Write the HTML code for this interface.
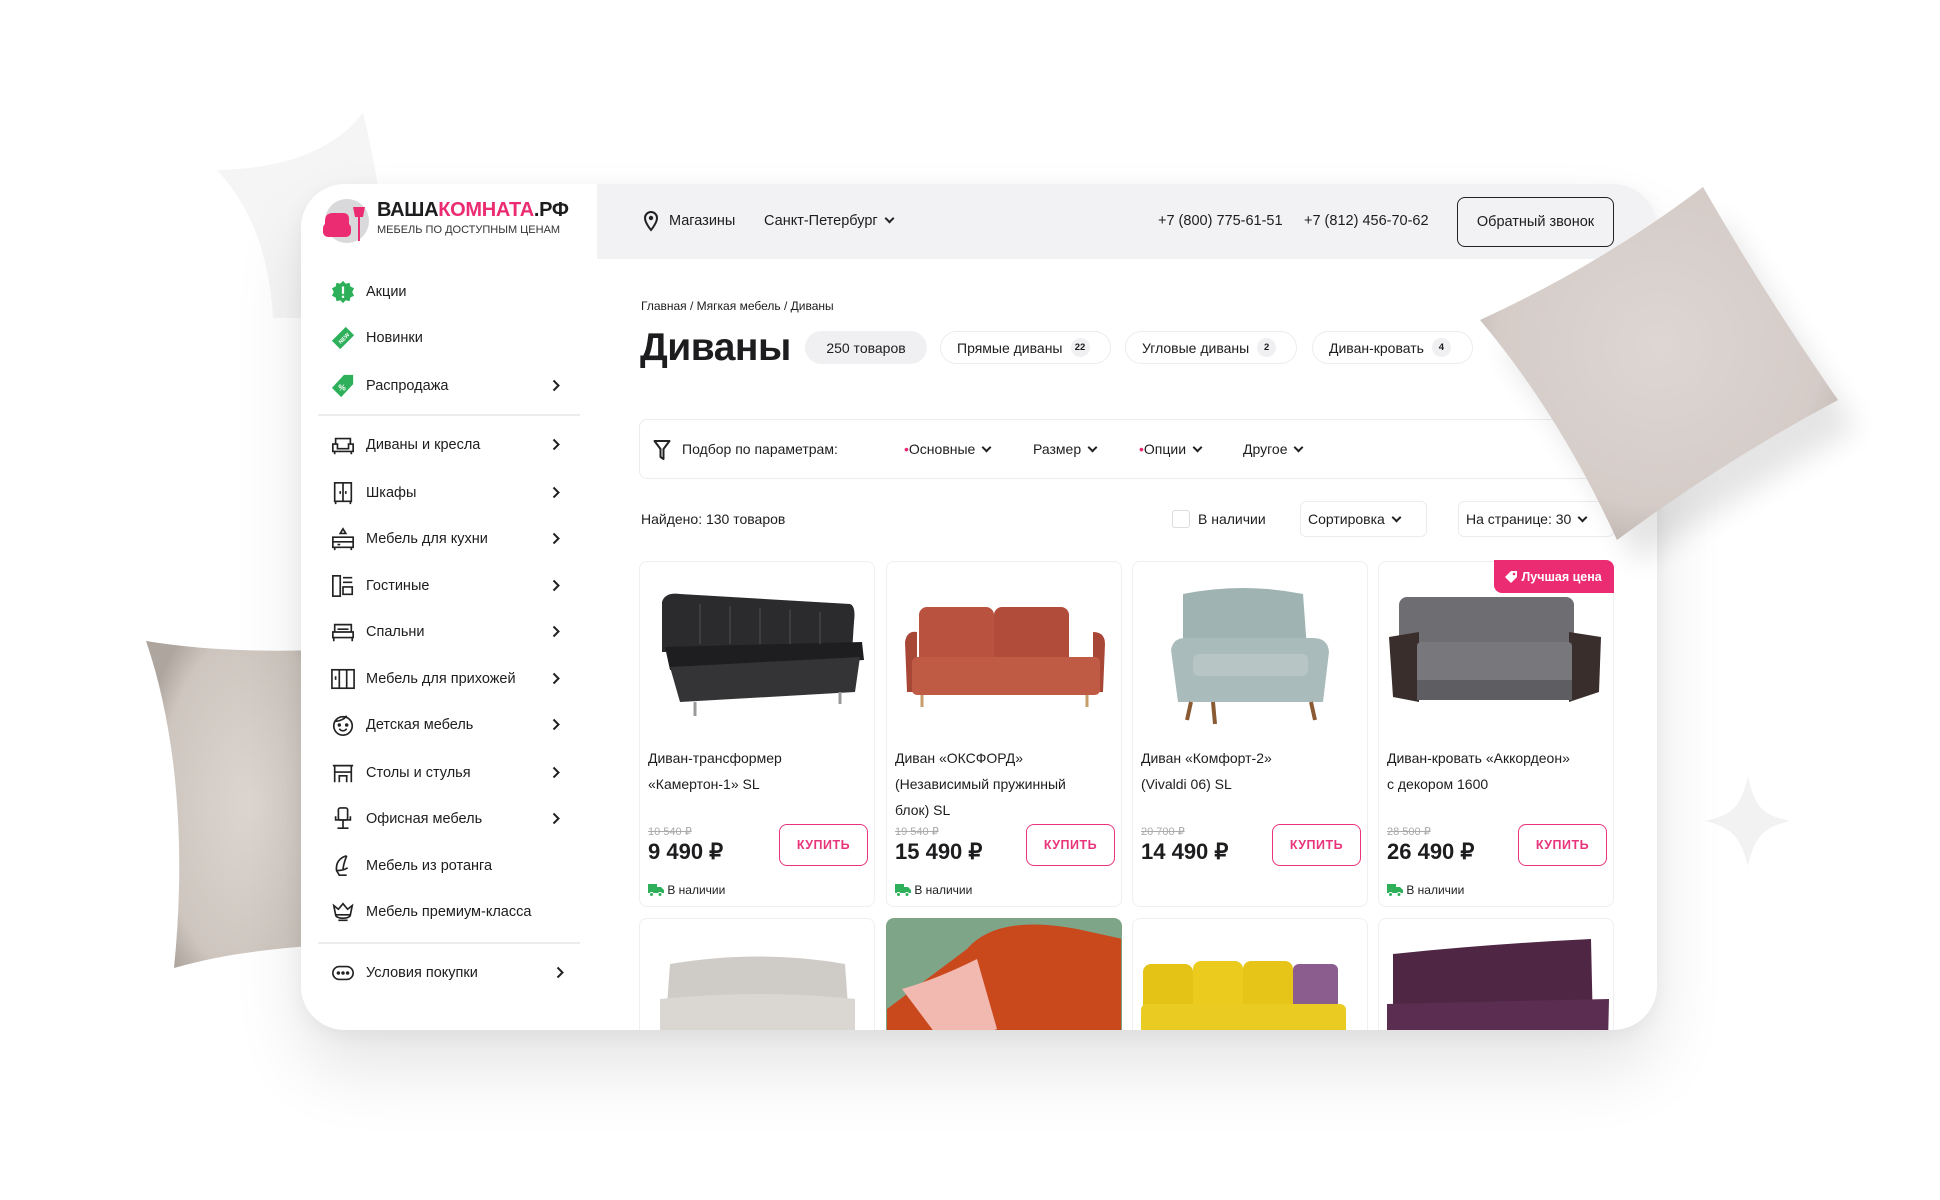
<!DOCTYPE html>
<html><head><meta charset="utf-8">
<style>
*{box-sizing:border-box;margin:0;padding:0}
html,body{width:1940px;height:1200px;overflow:hidden}
body{background:#fff;position:relative;font-family:"Liberation Sans","Noto Sans CJK SC",sans-serif;color:#1d1d1f}
.abs{position:absolute}
#win{position:absolute;left:301px;top:184px;width:1356px;height:846px;background:#fff;border-radius:44px;overflow:hidden;box-shadow:0 40px 70px rgba(0,0,0,.10),0 5px 20px rgba(0,0,0,.05)}
.side{position:absolute;left:0;top:0;width:296px;height:846px;background:#fff}
.hdr{position:absolute;left:296px;top:0;width:1060px;height:75px;background:#f2f2f4}
.mi{position:absolute;left:30px;height:30px;width:240px;font-size:14.5px;display:flex;align-items:center;white-space:nowrap}
.mi svg{width:24px;height:24px;margin-right:11px;flex:none}
.mi .ch{position:absolute;right:0;top:8px;width:8px;height:13px}
.sep{position:absolute;left:17px;width:262px;height:2px;background:#ececee}
.t{position:absolute;white-space:nowrap}
.chip{position:absolute;top:147px;height:33px;border:1.5px solid #ececee;border-radius:17px;font-size:14px;display:flex;align-items:center;padding:0 8px 0 16px;white-space:nowrap}
.chip b{font-size:9.5px;background:#f0f0f2;border-radius:50%;width:19px;height:19px;display:inline-flex;align-items:center;justify-content:center;margin-left:8px;font-weight:bold}
.dd{display:inline-block;width:7px;height:7px;border-right:2px solid #222;border-bottom:2px solid #222;transform:rotate(45deg);margin-left:8px;position:relative;top:-3px}
.card{position:absolute;width:236px;height:346px;border:1.5px solid #efeff1;border-radius:8px;background:#fff;overflow:hidden}
.card .ti{position:absolute;left:8px;top:183px;font-size:14px;line-height:26px;width:225px}
.card .op{position:absolute;left:8px;top:263px;font-size:11px;color:#aaa;text-decoration:line-through}
.card .pr{position:absolute;left:8px;top:277px;font-size:22px;font-weight:bold}
.card .bt{position:absolute;left:139px;top:262px;width:89px;height:42px;border:1.5px solid #e8347a;border-radius:8px;color:#e8347a;font-size:12.5px;font-weight:bold;display:flex;align-items:center;justify-content:center;letter-spacing:.5px}
.card .av{position:absolute;left:8px;top:321px;font-size:12px;display:flex;align-items:center}
.card .img{position:absolute;left:0;top:0;width:236px;height:170px}
</style></head><body>

<svg class="abs" style="left:0;top:0" width="1940" height="1200">
<defs>
<radialGradient id="pg" cx="50%" cy="45%" r="60%"><stop offset="0" stop-color="#ddd6d2"/><stop offset=".75" stop-color="#d5ccc8"/><stop offset="1" stop-color="#bdb3ae"/></radialGradient>
<radialGradient id="pg2" cx="60%" cy="50%" r="65%"><stop offset="0" stop-color="#ddd6d0"/><stop offset=".8" stop-color="#cdc5be"/><stop offset="1" stop-color="#aea59e"/></radialGradient>
</defs>
<path d="M363 113 Q320 168 217 170 Q268 225 273 318 L390 318 L378 186 Q370 140 363 113 Z" fill="#f5f5f6"/>
<path d="M1748 776 C1755 810 1765 815 1790 821 C1765 827 1755 835 1748 866 C1740 835 1730 827 1705 821 C1730 815 1740 810 1748 776Z" fill="#f2f2f3"/>
<path d="M146 641 C200 650 260 652 320 650 L320 945 C260 950 220 955 174 968 C185 860 180 740 146 641Z" fill="url(#pg2)"/>
</svg>

<div id="win">
 <div class="side">
  <svg class="abs" style="left:20px;top:15px" width="52" height="46" viewBox="0 0 52 46">
   <circle cx="26" cy="22" r="22" fill="#d9d9dc"/>
   <path d="M4 22 q0-8 8-8 h10 q6 0 6 6 v12 h-24z" fill="#ec2c72"/>
   <rect x="2" y="24" width="28" height="14" rx="5" fill="#ec2c72"/>
   <path d="M32 8 h12 l-2 10 h-8z" fill="#ec2c72"/><rect x="37" y="18" width="2" height="24" fill="#ec2c72"/>
  </svg>
  <div class="t" style="left:76px;top:15px;font-size:20px;font-weight:bold;letter-spacing:-.3px">ВАША<span style="color:#ec2c72">КОМНАТА</span>.РФ</div>
  <div class="t" style="left:76px;top:40px;font-size:11px;color:#333">МЕБЕЛЬ ПО ДОСТУПНЫМ ЦЕНАМ</div>

  <div class="mi" style="top:93px"><svg viewBox="0 0 26 26"><path d="M13 1l3 3 4-1 1 4 4 2-2 4 2 4-4 2-1 4-4-1-3 3-3-3-4 1-1-4-4-2 2-4-2-4 4-2 1-4 4 1z" fill="#2eb05a"/><rect x="11.8" y="7" width="2.4" height="8" fill="#fff"/><rect x="11.8" y="17" width="2.4" height="2.4" fill="#fff"/></svg>Акции</div>
  <div class="mi" style="top:139px"><svg viewBox="0 0 26 26"><path d="M16 1 L25 10 L10 25 L1 16Z" fill="#2eb05a"/><text x="7" y="17" font-size="6" fill="#fff" font-weight="bold" transform="rotate(-45 12 14)" font-family="Liberation Sans">NEW</text></svg>Новинки</div>
  <div class="mi" style="top:187px"><svg viewBox="0 0 26 26"><path d="M14 1 h10 v10 L11 25 L1 15Z" fill="#2eb05a"/><text x="8" y="18" font-size="9" fill="#fff" font-weight="bold" font-family="Liberation Sans">%</text></svg>Распродажа<svg class="ch" viewBox="0 0 8 13"><path d="M1.5 1.5l5 5-5 5" stroke="#222" stroke-width="2" fill="none"/></svg></div>
  <div class="sep" style="top:230px"></div>
  <div class="mi" style="top:246px"><svg viewBox="0 0 26 26" fill="none" stroke="#222" stroke-width="1.8"><path d="M5 12V6h16v6M2 12h5v5h12v-5h5v8H2zM4 20v3M22 20v3"/></svg>Диваны и кресла<svg class="ch" viewBox="0 0 8 13"><path d="M1.5 1.5l5 5-5 5" stroke="#222" stroke-width="2" fill="none"/></svg></div>
  <div class="mi" style="top:294px"><svg viewBox="0 0 26 26" fill="none" stroke="#222" stroke-width="1.8"><rect x="4" y="2" width="18" height="20"/><path d="M13 2v20M10 11v3M16 11v3M5 22v3M21 22v3"/></svg>Шкафы<svg class="ch" viewBox="0 0 8 13"><path d="M1.5 1.5l5 5-5 5" stroke="#222" stroke-width="2" fill="none"/></svg></div>
  <div class="mi" style="top:340px"><svg viewBox="0 0 26 26" fill="none" stroke="#222" stroke-width="1.8"><path d="M2 11h22v11H2zM2 16h22M13 2l-3 5h6zM4 22v3M22 22v3M7 19h3"/></svg>Мебель для кухни<svg class="ch" viewBox="0 0 8 13"><path d="M1.5 1.5l5 5-5 5" stroke="#222" stroke-width="2" fill="none"/></svg></div>
  <div class="mi" style="top:387px"><svg viewBox="0 0 26 26" fill="none" stroke="#222" stroke-width="1.8"><rect x="2" y="2" width="8" height="22"/><path d="M13 4h10M13 9h10M13 14h10v8H13z"/></svg>Гостиные<svg class="ch" viewBox="0 0 8 13"><path d="M1.5 1.5l5 5-5 5" stroke="#222" stroke-width="2" fill="none"/></svg></div>
  <div class="mi" style="top:433px"><svg viewBox="0 0 26 26" fill="none" stroke="#222" stroke-width="1.8"><path d="M4 13V5h18v8M2 13h22v6H2zM3 19v4M23 19v4M7 10h12"/></svg>Спальни<svg class="ch" viewBox="0 0 8 13"><path d="M1.5 1.5l5 5-5 5" stroke="#222" stroke-width="2" fill="none"/></svg></div>
  <div class="mi" style="top:480px"><svg viewBox="0 0 26 26" fill="none" stroke="#222" stroke-width="1.8"><rect x="1" y="3" width="24" height="20"/><path d="M9 3v20M17 3v20M5 10v4"/></svg>Мебель для прихожей<svg class="ch" viewBox="0 0 8 13"><path d="M1.5 1.5l5 5-5 5" stroke="#222" stroke-width="2" fill="none"/></svg></div>
  <div class="mi" style="top:526px"><svg viewBox="0 0 26 26" fill="none" stroke="#222" stroke-width="1.8"><circle cx="13" cy="14" r="10"/><path d="M5 9c5 0 10-3 12-6M9 17c2 3 6 3 8 0"/><circle cx="9" cy="13" r="1"/><circle cx="17" cy="13" r="1"/></svg>Детская мебель<svg class="ch" viewBox="0 0 8 13"><path d="M1.5 1.5l5 5-5 5" stroke="#222" stroke-width="2" fill="none"/></svg></div>
  <div class="mi" style="top:574px"><svg viewBox="0 0 26 26" fill="none" stroke="#222" stroke-width="1.8"><path d="M2 5h22M4 5v18M22 5v18M4 12h18M8 16h10M9 16v7M17 16v7"/></svg>Столы и стулья<svg class="ch" viewBox="0 0 8 13"><path d="M1.5 1.5l5 5-5 5" stroke="#222" stroke-width="2" fill="none"/></svg></div>
  <div class="mi" style="top:620px"><svg viewBox="0 0 26 26" fill="none" stroke="#222" stroke-width="1.8"><rect x="8" y="1" width="10" height="13" rx="2"/><path d="M5 10v4h16v-4M13 14v6M7 23h12M13 20v3"/></svg>Офисная мебель<svg class="ch" viewBox="0 0 8 13"><path d="M1.5 1.5l5 5-5 5" stroke="#222" stroke-width="2" fill="none"/></svg></div>
  <div class="mi" style="top:667px"><svg viewBox="0 0 26 26" fill="none" stroke="#222" stroke-width="1.8"><path d="M17 2c-8 2-12 8-11 16l3 5h8M17 2c-2 5-4 10-4 16M6 18c4 0 9-1 12-3"/></svg>Мебель из ротанга</div>
  <div class="mi" style="top:713px"><svg viewBox="0 0 26 26" fill="none" stroke="#222" stroke-width="1.8"><path d="M3 6l5 4 5-6 5 6 5-4-2 10H5zM5 16c0 5 16 5 16 0M8 22h10"/></svg>Мебель премиум-класса</div>
  <div class="sep" style="top:758px"></div>
  <div class="mi" style="top:774px"><svg viewBox="0 0 26 26" fill="none" stroke="#222" stroke-width="1.8"><rect x="2" y="6" width="22" height="14" rx="7"/><circle cx="8" cy="13" r="1" fill="#222"/><circle cx="13" cy="13" r="1" fill="#222"/><circle cx="18" cy="13" r="1" fill="#222"/></svg>Условия покупки<svg class="ch" style="right:-4px" viewBox="0 0 8 13"><path d="M1.5 1.5l5 5-5 5" stroke="#222" stroke-width="2" fill="none"/></svg></div>
 </div>

 <div class="hdr"></div>
 <svg class="abs" style="left:342px;top:26px" width="16" height="22" viewBox="0 0 16 22"><path d="M8 20s-6-7-6-12a6 6 0 0112 0c0 5-6 12-6 12z" fill="none" stroke="#222" stroke-width="2"/><circle cx="8" cy="8" r="2.2" fill="#222"/></svg>
 <div class="t" style="left:368px;top:29px;font-size:14.5px">Магазины</div>
 <div class="t" style="left:463px;top:29px;font-size:14.5px">Санкт-Петербург<span class="dd"></span></div>
 <div class="t" style="left:857px;top:29px;font-size:14.5px">+7 (800) 775-61-51</div>
 <div class="t" style="left:1003px;top:29px;font-size:14.5px">+7 (812) 456-70-62</div>
 <div class="abs" style="left:1156px;top:13px;width:157px;height:50px;border:1.5px solid #222;border-radius:8px;font-size:14.5px;display:flex;align-items:center;justify-content:center">Обратный звонок</div>

 <div class="t" style="left:340px;top:115px;font-size:12px">Главная / Мягкая мебель / Диваны</div>
 <div class="t" style="left:339px;top:142px;font-size:39px;font-weight:bold;letter-spacing:-.5px">Диваны</div>
 <div class="chip" style="left:504px;width:122px;background:#f0f0f2;border-color:#f0f0f2;padding:0;justify-content:center">250 товаров</div>
 <div class="chip" style="left:639px;width:171px">Прямые диваны<b>22</b></div>
 <div class="chip" style="left:824px;width:172px">Угловые диваны<b>2</b></div>
 <div class="chip" style="left:1011px;width:161px">Диван-кровать<b>4</b></div>

 <div class="abs" style="left:338px;top:235px;width:1000px;height:60px;border:1.5px solid #ececee;border-radius:8px"></div>
 <svg class="abs" style="left:352px;top:255px" width="18" height="22" viewBox="0 0 18 22"><path d="M1.5 2h15l-6 8v10l-3-2v-8z" fill="none" stroke="#222" stroke-width="2" stroke-linejoin="round"/></svg>
 <div class="t" style="left:381px;top:257px;font-size:14px">Подбор по параметрам:</div>
 <div class="t" style="left:603px;top:257px;font-size:14px"><span style="color:#ec2c72">•</span>Основные<span class="dd"></span></div>
 <div class="t" style="left:732px;top:257px;font-size:14px">Размер<span class="dd"></span></div>
 <div class="t" style="left:838px;top:257px;font-size:14px"><span style="color:#ec2c72">•</span>Опции<span class="dd"></span></div>
 <div class="t" style="left:942px;top:257px;font-size:14px">Другое<span class="dd"></span></div>

 <div class="t" style="left:340px;top:327px;font-size:14px">Найдено: 130 товаров</div>
 <div class="abs" style="left:871px;top:326px;width:18px;height:18px;border:1.5px solid #ddd;border-radius:3px"></div>
 <div class="t" style="left:897px;top:327px;font-size:14px">В наличии</div>
 <div class="abs" style="left:999px;top:317px;width:127px;height:36px;border:1.5px solid #ececee;border-radius:6px;font-size:14px;padding:9px 0 0 7px;white-space:nowrap">Сортировка<span class="dd"></span></div>
 <div class="abs" style="left:1157px;top:317px;width:156px;height:36px;border:1.5px solid #ececee;border-radius:6px;font-size:14px;padding:9px 0 0 7px;white-space:nowrap">На странице: 30<span class="dd"></span></div>

 <div class="card" style="left:338px;top:377px">
  <svg class="img" viewBox="0 0 236 170"><path d="M22 40 Q25 30 40 32 L210 42 Q216 44 214 60 L212 90 L22 90Z" fill="#2b2b2d"/><path d="M25 85 L222 80 L224 98 L30 108Z" fill="#1e1e20"/><path d="M30 105 L220 95 L215 130 L40 140Z" fill="#343436"/><path d="M60 42v40M90 44v38M120 46v36M150 48v34M180 50v32" stroke="#444" stroke-width="1.5"/><path d="M55 140v14M200 130v12" stroke="#999" stroke-width="3"/></svg>
  <div class="ti">Диван-трансформер<br>«Камертон-1» SL</div><div class="op">10 540 ₽</div><div class="pr">9 490 ₽</div><div class="bt">КУПИТЬ</div>
  <div class="av"><svg width="16" height="14" viewBox="0 0 16 14"><path d="M0 1h9v9H0zM9 4h4l3 3v3H9z" fill="#2eb05a"/><circle cx="3.5" cy="11.5" r="2" fill="#2eb05a" stroke="#fff"/><circle cx="12" cy="11.5" r="2" fill="#2eb05a" stroke="#fff"/></svg>&nbsp;В наличии</div>
 </div>
 <div class="card" style="left:585px;top:377px">
  <svg class="img" viewBox="0 0 236 170"><rect x="32" y="45" width="75" height="65" rx="8" fill="#b9523f"/><rect x="107" y="45" width="75" height="65" rx="8" fill="#b24c3a"/><path d="M18 80 Q20 68 30 70 L30 130 L20 130Z M206 70 Q218 70 218 82 L216 130 L206 130Z" fill="#a94736"/><rect x="25" y="95" width="188" height="38" rx="5" fill="#bf5a45"/><path d="M35 133v12M200 133v12" stroke="#c79d6a" stroke-width="3"/></svg>
  <div class="ti">Диван «ОКСФОРД»<br>(Независимый пружинный<br>блок) SL</div><div class="op">19 540 ₽</div><div class="pr">15 490 ₽</div><div class="bt">КУПИТЬ</div>
  <div class="av"><svg width="16" height="14" viewBox="0 0 16 14"><path d="M0 1h9v9H0zM9 4h4l3 3v3H9z" fill="#2eb05a"/><circle cx="3.5" cy="11.5" r="2" fill="#2eb05a" stroke="#fff"/><circle cx="12" cy="11.5" r="2" fill="#2eb05a" stroke="#fff"/></svg>&nbsp;В наличии</div>
 </div>
 <div class="card" style="left:831px;top:377px">
  <svg class="img" viewBox="0 0 236 170"><path d="M50 32 Q110 20 170 32 L175 100 L50 100Z" fill="#9fb3b2"/><path d="M38 88 Q40 75 55 76 L180 76 Q195 76 196 90 L190 140 L45 140Z" fill="#a9bcbb"/><rect x="60" y="92" width="115" height="22" rx="6" fill="#b7c6c4"/><path d="M58 140l-4 18M178 140l4 18M80 140l2 22" stroke="#8a5a33" stroke-width="4"/></svg>
  <div class="ti">Диван «Комфорт-2»<br>(Vivaldi 06) SL</div><div class="op">20 700 ₽</div><div class="pr">14 490 ₽</div><div class="bt">КУПИТЬ</div>
 </div>
 <div class="card" style="left:1077px;top:377px">
  <svg class="img" viewBox="0 0 236 170"><rect x="20" y="35" width="175" height="60" rx="8" fill="#6d6d72"/><path d="M10 75 L40 70 L40 140 L14 135Z M190 70 L222 75 L220 130 L190 140Z" fill="#3a2e2c"/><rect x="38" y="80" width="155" height="50" rx="4" fill="#77777c"/><rect x="38" y="118" width="155" height="20" fill="#5d5d62"/></svg>
  <div class="ti">Диван-кровать «Аккордеон»<br>с декором 1600</div><div class="op">28 500 ₽</div><div class="pr">26 490 ₽</div><div class="bt">КУПИТЬ</div>
  <div class="av"><svg width="16" height="14" viewBox="0 0 16 14"><path d="M0 1h9v9H0zM9 4h4l3 3v3H9z" fill="#2eb05a"/><circle cx="3.5" cy="11.5" r="2" fill="#2eb05a" stroke="#fff"/><circle cx="12" cy="11.5" r="2" fill="#2eb05a" stroke="#fff"/></svg>&nbsp;В наличии</div>
 </div>
 <div class="abs" style="left:1193px;top:376px;width:120px;height:33px;background:#ec2c72;border-radius:0 8px 0 8px;color:#fff;font-size:12.5px;font-weight:bold;display:flex;align-items:center;padding-left:10px;white-space:nowrap"><svg width="14" height="14" viewBox="0 0 14 14"><path d="M7 1h6v6l-6 6-6-6z" fill="#fff"/><circle cx="10" cy="4" r="1.3" fill="#ec2c72"/></svg>&nbsp;Лучшая цена</div>

 <div class="card" style="left:338px;top:734px">
  <svg class="img" viewBox="0 0 236 170"><path d="M30 45 Q120 30 205 45 L210 115 L25 115Z" fill="#cfcbc7"/><path d="M20 80 Q120 70 215 80 L215 120 L20 120Z" fill="#dad6d2"/></svg>
 </div>
 <div class="card" style="left:585px;top:734px;background:#7fa588;border-color:#7fa588">
  <svg class="img" viewBox="0 0 236 170"><path d="M80 30 Q110 -5 190 10 L236 20 L236 170 L0 170 L0 90 Q40 60 80 30Z" fill="#c9481c"/><path d="M15 70 Q50 60 90 40 L110 110 L60 130Z" fill="#f2b9b0"/></svg>
 </div>
 <div class="card" style="left:831px;top:734px">
  <svg class="img" viewBox="0 0 236 170"><rect x="10" y="45" width="50" height="50" rx="8" fill="#e4c316"/><rect x="60" y="42" width="50" height="52" rx="8" fill="#ebcb1e"/><rect x="110" y="42" width="50" height="52" rx="8" fill="#e6c418"/><rect x="160" y="45" width="45" height="45" rx="6" fill="#8a5d8e"/><rect x="8" y="85" width="205" height="85" rx="6" fill="#e9cb21"/></svg>
 </div>
 <div class="card" style="left:1077px;top:734px">
  <svg class="img" viewBox="0 0 236 170"><path d="M14 35 Q110 25 212 20 L214 110 L14 110Z" fill="#4f2745"/><path d="M8 85 L230 80 L228 170 L8 170Z" fill="#5b2d50"/></svg>
 </div>
</div>

<svg class="abs" style="left:0;top:0;pointer-events:none" width="1940" height="1200">
<defs><filter id="sh" x="-20%" y="-20%" width="140%" height="140%"><feGaussianBlur stdDeviation="14"/></filter></defs>
<path d="M1710 200 Q1770 300 1845 410 Q1740 470 1625 545 Q1560 420 1490 330 Q1610 280 1710 200Z" fill="#000" opacity=".10" filter="url(#sh)" transform="translate(12,18)"/>
<path d="M1703 187 Q1765 295 1838 400 Q1725 460 1617 540 Q1560 415 1480 320 Q1600 265 1703 187Z" fill="url(#pg)"/>
</svg>
</body></html>
